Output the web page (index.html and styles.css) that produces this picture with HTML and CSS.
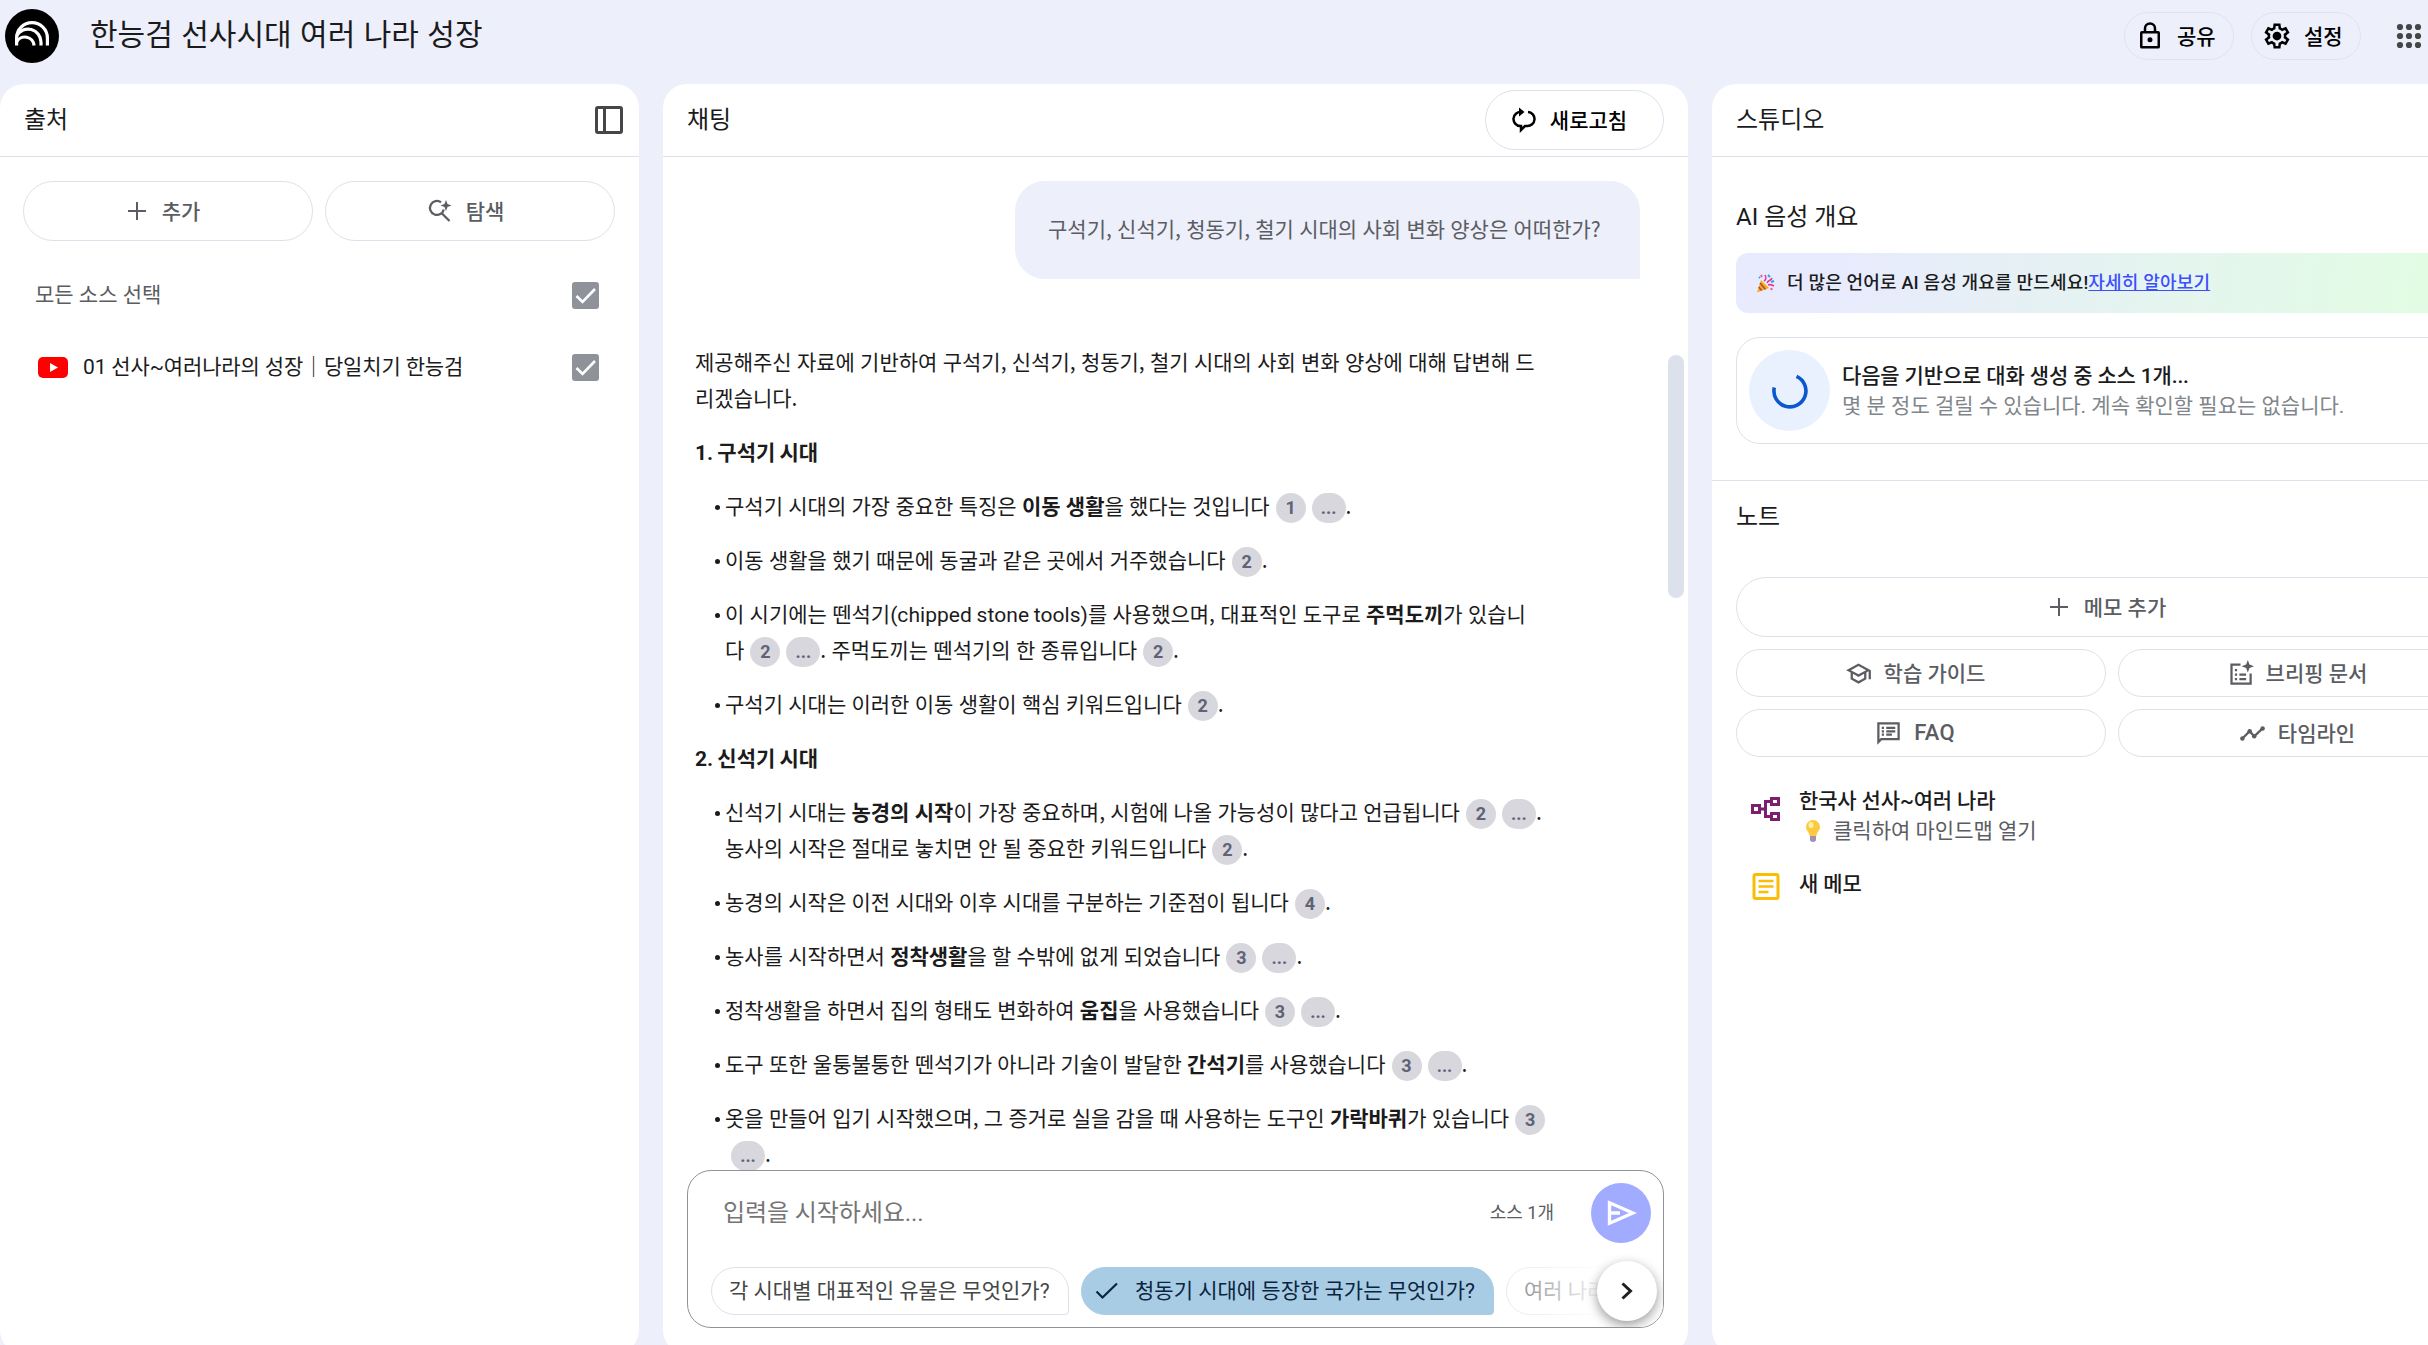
FILE: index.html
```
<!DOCTYPE html>
<html lang="ko">
<head>
    <meta charset="UTF-8">
    <title>한능검 선사시대 여러 나라 성장</title>
    <link rel="stylesheet" href="styles.css">
</head>
<body>
    <header class="topbar">
        <svg class="logo" viewBox="0 0 54 54">
            <circle cx="27" cy="27" r="27"/>
            <g fill="none" stroke="#fff" stroke-width="3.2">
                <path d="M11.6 36.500v-7.500a15.400 15.400 0 0 1 30.800 0V36.500"/>
                <path d="M11.800 26.500a13 13 0 0 1 24.200 6.500v3.500"/>
                <path d="M11.600 33a9.300 9.300 0 0 1 17.500 3.500"/>
            </g>
        </svg>
        <h1 class="title">한능검 선사시대 여러 나라 성장</h1>
        <div class="top-actions">
            <button class="top-btn">
                <svg width="30" height="30" viewBox="0 0 24 24"><path d="M18.500 8H17V6A5 5 0 0 0 7 6v2H5.500A1.500 1.500 0 0 0 4 9.500v11A1.500 1.500 0 0 0 5.500 22h13a1.500 1.500 0 0 0 1.500-1.500v-11A1.500 1.500 0 0 0 18.500 8zM9 6a3 3 0 0 1 6 0v2H9zm9 14H6V10h12zm-6-3a2 2 0 1 0 0-4 2 2 0 0 0 0 4z" fill-rule="evenodd"/></svg>
                <span>공유</span>
            </button>
            <button class="top-btn">
                <svg width="30" height="30" viewBox="0 0 24 24"><path fill-rule="evenodd" d="M9.250 22l-.4-3.200a4 4 0 0 1-.61-.3l-.57-.37L4.700 19.370l-2.750-4.740 2.570-1.950a3 3 0 0 1 0-1.350L1.950 9.370 4.700 4.630l2.970 1.250.6-.38.580-.3L9.250 2h5.500l.4 3.200.61.3.570.38 2.970-1.250 2.750 4.740-2.570 1.960v1.350l2.560 1.950-2.750 4.740-2.950-1.250-.6.380-.59.300-.4 3.200zM11 20h1.980l.35-2.650a5.500 5.500 0 0 0 2.630-1.530l2.470 1.030.98-1.700-2.150-1.630a5.400 5.400 0 0 0 0-3.050l2.150-1.630-.98-1.700-2.480 1.050a5.500 5.500 0 0 0-2.620-1.540L13 4h-1.980l-.35 2.650A5.500 5.500 0 0 0 8.040 8.180L5.570 7.150l-.98 1.700 2.150 1.600a5.400 5.400 0 0 0 0 3.100L4.600 15.150l.98 1.700 2.470-1.050a5.500 5.500 0 0 0 2.620 1.550z"/><circle cx="12" cy="12" r="3.500"/></svg>
                <span>설정</span>
            </button>
            <svg class="apps" width="26" height="26" viewBox="0 0 26 26">
                <circle cx="4" cy="4" r="3.100"/><circle cx="13" cy="4" r="3.100"/><circle cx="22" cy="4" r="3.100"/>
                <circle cx="4" cy="13" r="3.100"/><circle cx="13" cy="13" r="3.100"/><circle cx="22" cy="13" r="3.100"/>
                <circle cx="4" cy="22" r="3.100"/><circle cx="13" cy="22" r="3.100"/><circle cx="22" cy="22" r="3.100"/>
            </svg>
        </div>
    </header>

    <main class="panels">
        <section class="panel">
            <div class="panel-head">
                <h2>출처</h2>
                <svg class="dock" width="28" height="28" viewBox="0 0 28 28" fill="none" stroke="#444746" stroke-width="3"><rect x="1.500" y="1.500" width="25" height="25" rx="1.500"/><path d="M9.500 2v24"/></svg>
            </div>
            <div class="source-btns">
                <button class="btn">
                    <svg width="18" height="18" viewBox="0 0 18 18"><path d="M8 0h2v8h8v2h-8v8H8v-8H0V8h8z"/></svg>
                    <span>추가</span>
                </button>
                <button class="btn btn-search">
                    <svg width="24" height="24" viewBox="0 0 24 24"><path fill="none" stroke="currentColor" stroke-width="2.300" d="M13 3.200A7 7 0 1 0 15.800 10.500M14 14.500l7.500 7.500"/><path d="M18 1l1.500 4 4 1.500-4 1.500L18 12l-1.500-4-4-1.500 4-1.500z"/></svg>
                    <span>탐색</span>
                </button>
            </div>
            <div class="source-row all">
                <span>모든 소스 선택</span>
                <svg class="check" viewBox="0 0 27 27"><rect width="27" height="27" rx="3"/><path d="M4.500 14l6 6L23 7"/></svg>
            </div>
            <div class="source-row">
                <svg class="youtube" width="30" height="21" viewBox="0 0 30 21"><rect width="30" height="21" rx="5" fill="#f00"/><path d="M12 6l8 4.500-8 4.500z" fill="#fff"/></svg>
                <span class="source-name">01 선사~여러나라의 성장｜당일치기 한능검</span>
                <svg class="check" viewBox="0 0 27 27"><rect width="27" height="27" rx="3"/><path d="M4.500 14l6 6L23 7"/></svg>
            </div>
        </section>

        <section class="panel chat">
            <div class="panel-head">
                <h2>채팅</h2>
                <button class="btn btn-refresh">
                    <svg width="24" height="26" viewBox="0 0 24 26"><path fill="none" stroke="currentColor" stroke-width="2.500" d="M11 5H9a7 7 0 0 0-1 14h1v4l4-4h2a7 7 0 0 0 1-14"/><path d="M7 .5L12.500 5 7 9.500z"/></svg>
                    <span>새로고침</span>
                </button>
            </div>
            <div class="chat-log">
                <div class="question">구석기, 신석기, 청동기, 철기 시대의 사회 변화 양상은 어떠한가?</div>
                <div class="answer">
                    <p>제공해주신 자료에 기반하여 구석기, 신석기, 청동기, 철기 시대의 사회 변화 양상에 대해 답변해 드<br>리겠습니다.</p>
                    <p class="era">1. 구석기 시대</p>
                    <ul>
                        <li>구석기 시대의 가장 중요한 특징은 <b>이동 생활</b>을 했다는 것입니다<i>1</i><i class="more">...</i>.</li>
                        <li>이동 생활을 했기 때문에 동굴과 같은 곳에서 거주했습니다<i>2</i>.</li>
                        <li>이 시기에는 뗀석기<span class="latin">(chipped stone tools)</span>를 사용했으며, 대표적인 도구로 <b>주먹도끼</b>가 있습니<br>다<i>2</i><i class="more">...</i>. 주먹도끼는 뗀석기의 한 종류입니다<i>2</i>.</li>
                        <li>구석기 시대는 이러한 이동 생활이 핵심 키워드입니다<i>2</i>.</li>
                    </ul>
                    <p class="era">2. 신석기 시대</p>
                    <ul>
                        <li>신석기 시대는 <b>농경의 시작</b>이 가장 중요하며, 시험에 나올 가능성이 많다고 언급됩니다<i>2</i><i class="more">...</i>.<br>농사의 시작은 절대로 놓치면 안 될 중요한 키워드입니다<i>2</i>.</li>
                        <li>농경의 시작은 이전 시대와 이후 시대를 구분하는 기준점이 됩니다<i>4</i>.</li>
                        <li>농사를 시작하면서 <b>정착생활</b>을 할 수밖에 없게 되었습니다<i>3</i><i class="more">...</i>.</li>
                        <li>정착생활을 하면서 집의 형태도 변화하여 <b>움집</b>을 사용했습니다<i>3</i><i class="more">...</i>.</li>
                        <li>도구 또한 울퉁불퉁한 뗀석기가 아니라 기술이 발달한 <b>간석기</b>를 사용했습니다<i>3</i><i class="more">...</i>.</li>
                        <li>옷을 만들어 입기 시작했으며, 그 증거로 실을 감을 때 사용하는 도구인 <b>가락바퀴</b>가 있습니다<i>3</i><br><i class="more">...</i>.</li>
                    </ul>
                </div>
                <div class="thumb"></div>
            </div>
            <div class="composer">
                <div class="prompt">
                    <span class="placeholder">입력을 시작하세요...</span>
                    <span class="count">소스 1개</span>
                    <button class="send">
                        <svg width="30" height="26" viewBox="0 0 30 26" fill="none" stroke="#fff" stroke-width="3.400"><path d="M2.500 2.800v20.400L26 13zM3 13h10"/></svg>
                    </button>
                </div>
                <div class="chips">
                    <span class="chip">각 시대별 대표적인 유물은 무엇인가?</span>
                    <span class="chip chosen"><svg width="24" height="18" viewBox="0 0 24 18" fill="none" stroke="currentColor" stroke-width="2.200"><path d="M1.500 9.500l6 6L22 1.500"/></svg>청동기 시대에 등장한 국가는 무엇인가?</span>
                    <span class="chip">여러 나라</span>
                </div>
                <div class="fade"></div>
                <button class="next">
                    <svg width="12" height="18" viewBox="0 0 12 18" fill="none" stroke="#1f1f1f" stroke-width="3"><path d="M1.500 1.500L9.500 9l-8 7.500"/></svg>
                </button>
            </div>
        </section>

        <section class="panel studio">
            <div class="panel-head"><h2>스튜디오</h2></div>
            <div class="audio">
                <h3>AI 음성 개요</h3>
                <div class="banner">
                    <svg width="19" height="19" viewBox="0 0 19 19"><path d="M5 6l8 8L1 18.500z" fill="#f9a825"/><path d="M4 9l5.500 6.500M2.700 13l3 3.500" stroke="#a1522d" stroke-width="1.500"/><path d="M8 7c3-2 2-4 1-6M11 9c1-3 4-2 5-5M12 11c2-1 4 0 6 1" fill="none" stroke="#e5398c" stroke-width="1.600"/><path d="M12 1l2 2M15 8l3-1M3 3l1 1" stroke="#29a3e8" stroke-width="2"/><path d="M15 14l1 2M5 1l1 2" stroke="#f25c8a" stroke-width="2"/></svg>
                    <span>더 많은 언어로 AI 음성 개요를 만드세요!<a href="#">자세히 알아보기</a></span>
                </div>
                <div class="status">
                    <div class="spinner">
                        <svg width="38" height="38" viewBox="0 0 38 38" fill="none" stroke="#0b57d0" stroke-width="3.600"><path d="M25.500 4.300A16 16 0 1 1 3.300 15.500"/></svg>
                    </div>
                    <div class="status-text">
                        <b>다음을 기반으로 대화 생성 중 소스 1개...</b>
                        <span>몇 분 정도 걸릴 수 있습니다. 계속 확인할 필요는 없습니다.</span>
                    </div>
                </div>
            </div>
            <div class="notes">
                <h3>노트</h3>
                <div class="note-btns">
                    <button class="btn wide">
                        <svg width="18" height="18" viewBox="0 0 18 18"><path d="M8 0h2v8h8v2h-8v8H8v-8H0V8h8z"/></svg>
                        <span>메모 추가</span>
                    </button>
                    <button class="btn small">
                        <svg width="27" height="27" viewBox="0 0 24 24"><path fill-rule="evenodd" d="M12 3L1 9l4 2.200v6L12 21l7-3.800v-6l2-1.100V17h2V9zm6.800 6L12 12.700 5.200 9 12 5.300zM17 16l-5 2.700L7 16v-3.700l5 2.700 5-2.700z"/></svg>
                        <span>학습 가이드</span>
                    </button>
                    <button class="btn small">
                        <svg width="27" height="27" viewBox="0 0 24 24"><path fill="none" stroke="currentColor" stroke-width="2" d="M12 4H4v17h17v-9"/><path d="M7 8h2v2H7zm0 4h2v2H7zm0 4h2v2H7zm4-4h6v2h-6zm0 4h6v2h-6zM18.500 0L20 4l4 1.500L20 7l-1.500 4L17 7l-4-1.500L17 4z"/></svg>
                        <span>브리핑 문서</span>
                    </button>
                    <button class="btn small">
                        <svg width="27" height="27" viewBox="0 0 24 24"><path d="M4 4v13.200L5.200 16H20V4zM2 22V2h20v16H6z" fill-rule="evenodd"/><path d="M6 6h2v2H6zm0 3h2v2H6zm0 3h2v2H6zm4-6h8v2h-8zm0 3h8v2h-8zm0 3h5v2h-5z"/></svg>
                        <span class="faq">FAQ</span>
                    </button>
                    <button class="btn small">
                        <svg width="27" height="27" viewBox="0 0 24 24"><path fill="none" stroke="currentColor" stroke-width="2" d="M3 16.500L9.500 10l4 4.500L21 7.500"/><circle cx="3" cy="16.500" r="2"/><circle cx="9.500" cy="10" r="2"/><circle cx="13.500" cy="14.500" r="2"/><circle cx="21" cy="7.500" r="2"/></svg>
                        <span>타임라인</span>
                    </button>
                </div>
                <div class="note">
                    <svg width="30" height="26" viewBox="0 0 30 26" fill="none" stroke="#7b1f6e" stroke-width="3"><path d="M1.500 9.500h7v7h-7zM20.500 2.500h7v6h-7zM20.500 17.500h7v6h-7zM9 13h5.500M20 5.500h-5.500v15H20"/></svg>
                    <div class="note-text">
                        <b>한국사 선사~여러 나라</b>
                        <span><svg width="16" height="22" viewBox="0 0 16 22"><path d="M8 0a7 7 0 0 0-7 7c0 4 3.500 5 3.500 9h7c0-4 3.500-5 3.500-9a7 7 0 0 0-7-7z" fill="#fdc93f"/><ellipse cx="6" cy="5" rx="2.500" ry="3" fill="#fff0a8"/><path d="M5 16h6v4.500L9 22H7l-2-1.500z" fill="#a58fb5"/></svg>클릭하여 마인드맵 열기</span>
                    </div>
                </div>
                <div class="note memo">
                    <svg width="30" height="27" viewBox="0 0 30 27" fill="none" stroke="#fbbc04" stroke-width="3"><rect x="3" y="1.500" width="24" height="24" rx="1.500"/><path d="M7.500 8h15M7.500 13.500h15M7.500 19h10" stroke-width="2.600"/></svg>
                    <div class="note-text"><b>새 메모</b></div>
                </div>
            </div>
        </section>
    </main>
</body>
</html>
```
FILE: styles.css
```
* {
    box-sizing: border-box;
}
body {
    margin: 0;
    height: 1345px;
    overflow: hidden;
    background: #edeffb;
    color: #1b1b1c;
    font-family: Roboto, "Noto Sans CJK KR", sans-serif;
    font-size: 21px;
    line-height: 30px;
    white-space: nowrap;
}
h1, h2, h3, p, ul {
    margin: 0;
    padding: 0;
    font-weight: 400;
}
svg {
    display: block;
    flex: none;
    fill: currentColor;
}
svg[fill="none"] {
    fill: none;
}
b {
    font-weight: 700;
}
button {
    font: inherit;
    color: inherit;
    background: none;
    padding: 0;
}

/* top bar */
.topbar {
    display: flex;
    align-items: flex-start;
    height: 84px;
    padding: 9px 6px 0 5px;
}
.logo {
    width: 54px;
    height: 54px;
    color: #000;
}
.title {
    margin-left: 31px;
    font-size: 30px;
    line-height: 52px;
    word-spacing: 1px;
}
.top-actions {
    display: flex;
    align-items: center;
    margin: 3px 0 0 auto;
    color: #000;
    font-weight: 500;
}
.top-btn {
    display: flex;
    align-items: center;
    width: 110px;
    height: 48px;
    margin-right: 17px;
    padding-left: 10px;
    border: 1px solid #e1e3ef;
    border-radius: 24px;
}
.top-btn span {
    margin: 2px 0 0 12px;
}
.apps {
    margin-left: 18px;
    color: #444746;
}

/* panels */
.panels {
    display: grid;
    grid-template-columns: 639px 1025px 800px;
    gap: 24px;
    height: 1270px;
}
.panel {
    background: #fff;
    border-radius: 24px;
}
.panel-head {
    display: flex;
    align-items: center;
    justify-content: space-between;
    height: 73px;
    padding: 0 24px;
    border-bottom: 1px solid #dde1eb;
}
.panel-head h2 {
    font-size: 24px;
    margin-top: -1px;
}
.dock {
    margin-right: -8px;
}
.btn {
    display: flex;
    align-items: center;
    justify-content: center;
    gap: 16px;
    height: 60px;
    padding-right: 8px;
    border: 1px solid #dde1eb;
    border-radius: 30px;
    color: #5b5d62;
    font-weight: 500;
}
.btn span {
    margin-top: 2px;
}

/* sources */
.source-btns {
    display: grid;
    grid-template-columns: 1fr 1fr;
    gap: 12px;
    padding: 24px 24px 0 23px;
}
.btn-search {
    gap: 14px;
}
.source-row {
    display: flex;
    align-items: center;
    height: 54px;
    margin-top: 18px;
    padding: 0 40px 0 38px;
}
.source-row.all {
    margin-top: 27px;
    padding-left: 35px;
    color: #5b5d62;
}
.source-name {
    letter-spacing: -0.15px;
}
.youtube {
    margin-right: 15px;
}
.check {
    width: 27px;
    height: 27px;
    margin-left: auto;
    color: #8f9299;
}
.check path {
    fill: none;
    stroke: #fff;
    stroke-width: 2.600;
}

/* chat */
.chat {
    position: relative;
}
.btn-refresh {
    width: 179px;
    padding: 0 10px 0 0;
    gap: 14px;
    color: #000;
}
.chat-log {
    height: 1013px;
    padding: 24px 48px 0 32px;
    overflow: hidden;
}
.question {
    width: 625px;
    height: 98px;
    margin-left: auto;
    padding-left: 33px;
    background: #edeffb;
    border-radius: 30px 30px 0 30px;
    color: #5b5d62;
    line-height: 95px;
}
.question, .answer {
    font-family: "Noto Sans CJK KR", Roboto, sans-serif;
    word-spacing: -0.6px;
}
.answer {
    margin-top: 64px;
    line-height: 36px;
}
.answer p, .answer li {
    margin-bottom: 18px;
}
.answer .era {
    margin-bottom: 16px;
    padding-top: 2px;
    font-family: Roboto, "Noto Sans CJK KR", sans-serif;
    font-weight: 700;
    word-spacing: -1px;
}
.answer ul {
    padding-left: 30px;
    list-style: none;
}
.answer li::before {
    content: "";
    display: inline-block;
    width: 5px;
    height: 5px;
    margin: 0 5px 4px -10px;
    border-radius: 50%;
    background: #1b1b1c;
}
.answer i {
    display: inline-block;
    width: 30px;
    height: 30px;
    margin: -8px 0 -8px 6px;
    border-radius: 15px;
    background: #d8d7dd;
    color: #5f6377;
    font-family: Roboto, sans-serif;
    font-size: 18px;
    font-style: normal;
    font-weight: 700;
    line-height: 30px;
    text-align: center;
}
.answer .more {
    width: 34px;
}
.latin {
    font-family: Roboto, sans-serif;
    letter-spacing: 0.05px;
    line-height: 1;
}
.thumb {
    position: absolute;
    top: 271px;
    left: 1005px;
    width: 16px;
    height: 243px;
    border-radius: 8px;
    background: #dde1eb;
}
.composer {
    position: relative;
    height: 158px;
    margin: 0 24px;
    padding: 12px 12px 0 23px;
    border: 1px solid #8f9299;
    border-radius: 24px;
    overflow: hidden;
}
.prompt {
    display: flex;
    align-items: center;
    padding-left: 12px;
}
.placeholder {
    color: #757575;
    font-size: 24px;
    letter-spacing: -0.1px;
}
.count {
    margin: 0 37px 0 auto;
    color: #5b5d62;
    font-size: 18px;
}
.send, .next {
    display: flex;
    align-items: center;
    justify-content: center;
    width: 60px;
    height: 60px;
    border: none;
    border-radius: 50%;
}
.send {
    padding-left: 2px;
    background: #a1abff;
}
.chips {
    display: flex;
    gap: 12px;
    margin-top: 24px;
    width: 1200px;
}
.chip {
    display: flex;
    align-items: center;
    width: 358px;
    height: 48px;
    padding-left: 17px;
    border: 1px solid #dde1eb;
    border-radius: 24px 24px 4px 24px;
    color: #444746;
}
.chosen {
    width: 413px;
    padding-left: 13px;
    border-color: #a9cce5;
    background: #a9cce5;
    color: #0a2540;
}
.chosen svg {
    margin-right: 16px;
}
.fade {
    position: absolute;
    top: 84px;
    right: 0;
    width: 160px;
    height: 72px;
    background: linear-gradient(to right, rgba(255, 255, 255, 0.3), #fff 65%);
}
.next {
    position: absolute;
    top: 90px;
    right: 6px;
    background: #fff;
    box-shadow: 0 4px 12px rgba(0, 0, 0, 0.4);
}

/* studio */
.studio h3 {
    font-size: 24px;
    line-height: 36px;
}
.audio {
    height: 324px;
    padding: 42px 24px 0;
    border-bottom: 1px solid #dde1eb;
}
.banner {
    display: flex;
    align-items: center;
    gap: 12px;
    height: 60px;
    margin: 18px 0 24px;
    padding-left: 20px;
    border-radius: 12px;
    background: linear-gradient(100deg, #e8eafe 10%, #e2fce4 90%);
    font-size: 18px;
    font-weight: 500;
    letter-spacing: 0.18px;
}
.banner a {
    color: #3d4eff;
}
.status {
    display: flex;
    align-items: center;
    height: 107px;
    padding-left: 12px;
    border: 1px solid #dde1eb;
    border-radius: 24px;
}
.spinner {
    display: grid;
    place-items: center;
    width: 81px;
    height: 81px;
    margin-right: 12px;
    border-radius: 50%;
    background: #eaf1fe;
}
.status-text, .note-text {
    display: flex;
    flex-direction: column;
}
.studio b {
    font-weight: 500;
    letter-spacing: -0.15px;
}
.status-text span {
    color: #80868b;
}
.notes {
    padding: 18px 24px 0;
}
.note-btns {
    display: grid;
    grid-template-columns: 1fr 1fr;
    gap: 12px;
    margin-top: 42px;
}
.wide {
    grid-column: span 2;
}
.small {
    gap: 12px;
    height: 48px;
    padding-right: 12px;
    border-radius: 24px;
}
.btn .faq {
    margin-top: 0;
    font-size: 22px;
    letter-spacing: 0.3px;
}
.note {
    display: flex;
    gap: 18px;
    margin-top: 29px;
    padding-left: 15px;
}
.note > svg {
    margin-top: 10px;
}
.note-text span {
    display: flex;
    align-items: center;
    gap: 12px;
    padding-left: 6px;
    color: #5b5d62;
}
.memo {
    margin-top: 23px;
}
.memo > svg {
    margin-top: 4px;
}
```
